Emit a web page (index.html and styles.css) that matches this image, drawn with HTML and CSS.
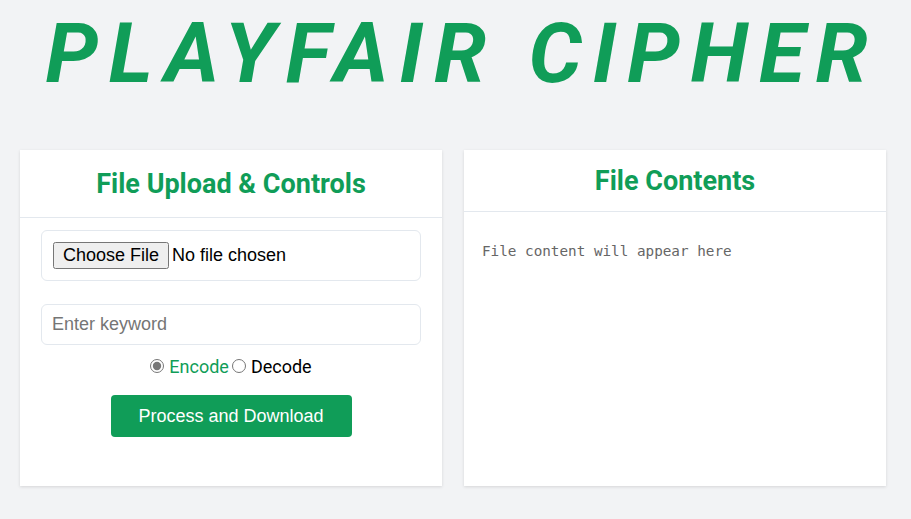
FILE: index.html
```html
<!DOCTYPE html>
<html>
<head>
<meta charset="utf-8">
<link rel="stylesheet" href="styles.css">
</head>
<body>
<h1 class="title">PLAYFAIR CIPHER</h1>
<main class="panels">
  <section class="card">
    <div class="card-head head-left"><h2>File Upload &amp; Controls</h2></div>
    <div class="card-body controls">
      <div class="file-box"><input type="file"></div>
      <input class="keyword" type="text" placeholder="Enter keyword">
      <div class="modes">
        <label class="mode active"><input type="radio" name="mode" checked>Encode</label>
        <label class="mode"><input type="radio" name="mode">Decode</label>
      </div>
      <button class="process">Process and Download</button>
    </div>
  </section>
  <section class="card">
    <div class="card-head head-right"><h2>File Contents</h2></div>
    <div class="card-body contents">
      <pre class="output">File content will appear here</pre>
    </div>
  </section>
</main>
</body>
</html>
```
FILE: styles.css
```css
html, body { margin: 0; padding: 0; }
body {
  background: #f2f3f5;
  font-family: Roboto, "Liberation Sans", sans-serif;
  width: 911px;
  height: 519px;
  overflow: hidden;
}
.title {
  margin: 0;
  padding: 10px 0 0 13px;
  height: 140px;
  box-sizing: border-box;
  text-align: center;
  font-family: Roboto, sans-serif;
  font-weight: 700;
  font-style: italic;
  font-size: 84px;
  line-height: 88px;
  letter-spacing: 10.8px;
  color: #109d58;
}
.panels {
  display: grid;
  grid-template-columns: 422px 422px;
  gap: 22px;
  padding: 10px 0 0 20px;
}
.card {
  background: #fff;
  height: 336px;
  box-shadow: 0 1px 3px rgba(0,0,0,0.12);
  display: flex;
  flex-direction: column;
}
.card-head {
  border-bottom: 1px solid #e3e8ee;
  display: flex;
  align-items: center;
  justify-content: center;
}
.head-left { height: 67px; }
.head-right { height: 61px; }
.card-head h2 {
  margin: 0;
  font-family: Roboto, sans-serif;
  font-weight: 700;
  font-size: 27px;
  color: #109d58;
}
.controls {
  padding: 12px 21px 0;
  display: flex;
  flex-direction: column;
  align-items: center;
}
.file-box {
  align-self: stretch;
  height: 51px;
  box-sizing: border-box;
  border: 1px solid #e3e8ee;
  border-radius: 6px;
  padding: 0 11px;
  display: flex;
  align-items: center;
}
.file-box input {
  font-family: "Liberation Sans", Arial, sans-serif;
  font-size: 18px;
}
.file-box input::file-selector-button {
  font-family: "Liberation Sans", Arial, sans-serif;
  font-size: 18px;
  padding: 1px 8px;
  margin-right: 3px;
}
.keyword {
  align-self: stretch;
  margin-top: 23px;
  height: 41px;
  box-sizing: border-box;
  border: 1px solid #e3e8ee;
  border-radius: 6px;
  padding: 0 10px;
  font-family: "Liberation Sans", Arial, sans-serif;
  font-size: 18px;
  color: #333;
  outline: none;
}
.keyword::placeholder { color: #757575; }
.modes {
  margin-top: 9px;
  display: flex;
  align-items: center;
  font-family: Roboto, sans-serif;
  font-size: 18px;
  height: 24px;
}
.mode { display: flex; align-items: center; color: #000; }
.mode.active { color: #109d58; margin-right: 3px; }
.mode input {
  margin: 0 5px 0 0;
  width: 14px;
  height: 14px;
  accent-color: #777;
}
.process {
  margin-top: 17px;
  width: 241px;
  height: 42px;
  border: none;
  border-radius: 4px;
  background: #109d58;
  color: #fff;
  font-family: "Liberation Sans", Arial, sans-serif;
  font-size: 18px;
  cursor: pointer;
}
.contents { padding: 31px 18px; }
.output {
  margin: 0;
  font-family: "DejaVu Sans Mono", monospace;
  font-size: 14.3px;
  color: #666;
}
```
